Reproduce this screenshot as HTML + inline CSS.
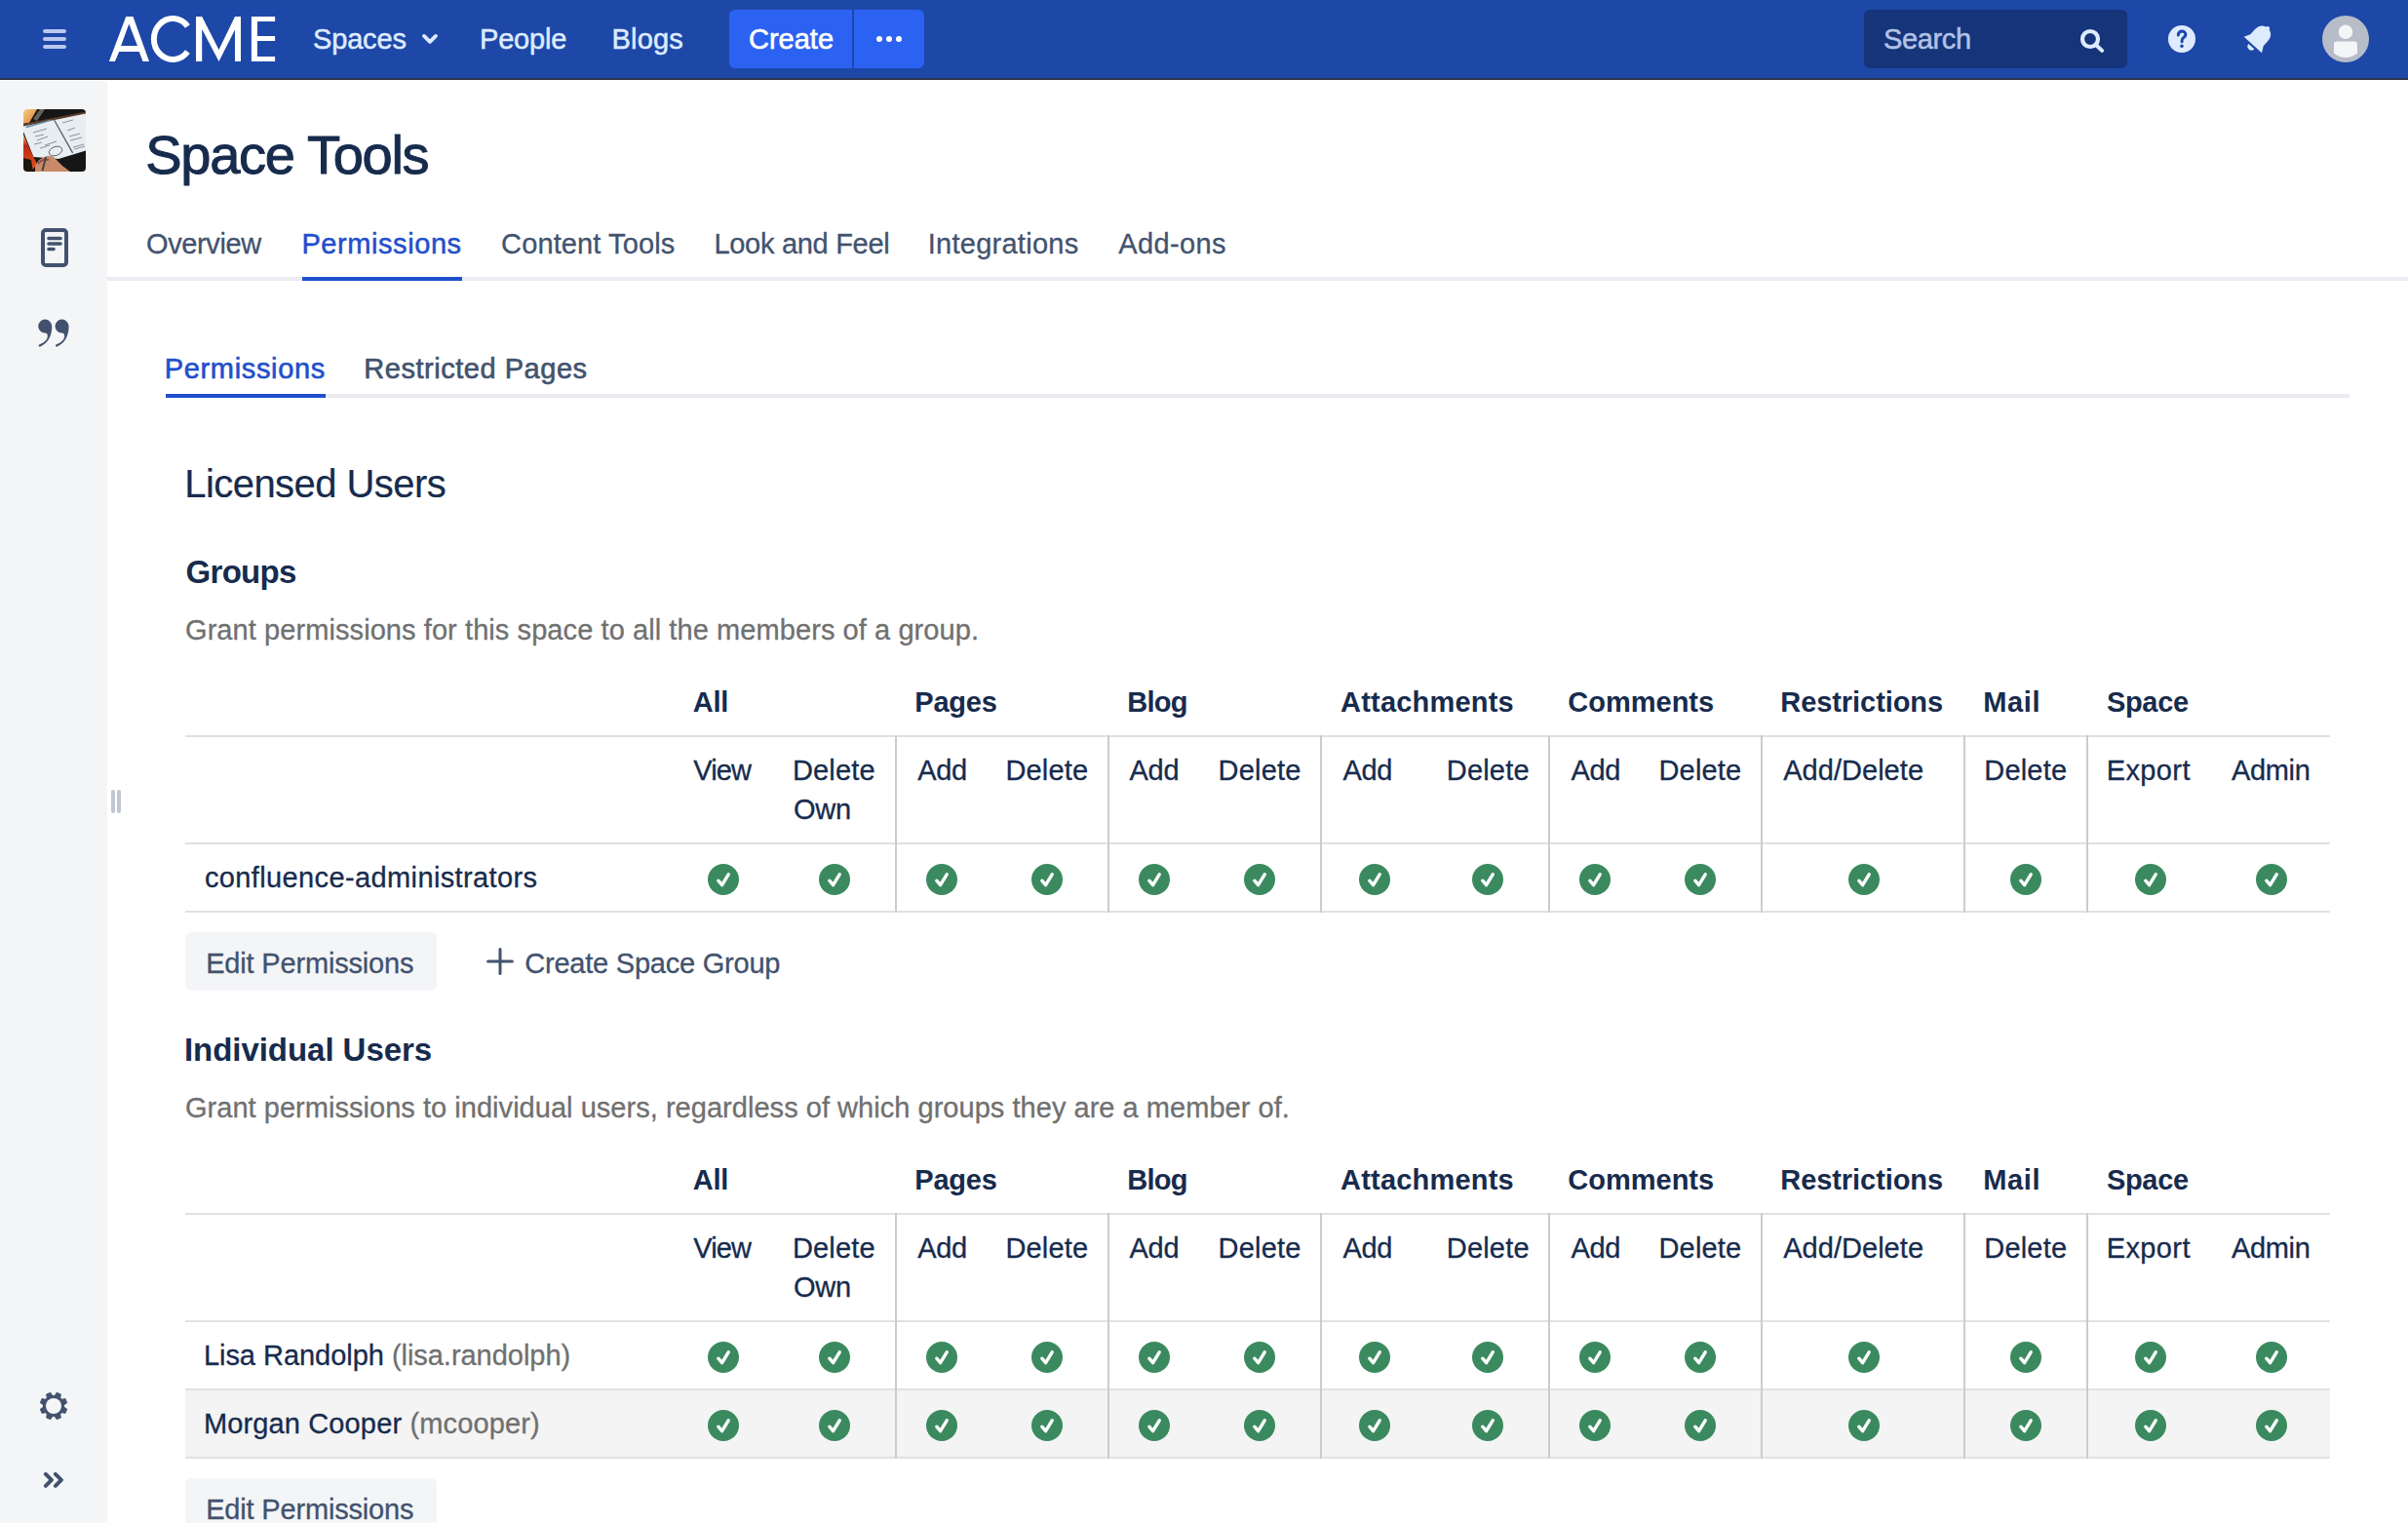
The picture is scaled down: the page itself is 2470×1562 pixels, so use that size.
<!DOCTYPE html>
<html><head><meta charset="utf-8"><title>Space Tools - Permissions</title>
<style>
html,body{margin:0;padding:0;}
body{width:2470px;height:1562px;position:relative;overflow:hidden;background:#fff;font-family:"Liberation Sans", sans-serif;-webkit-font-smoothing:antialiased;}
</style></head><body>
<div style="position:absolute;left:0px;top:0px;width:2470px;height:80px;background:#1D48A8;"></div>
<div style="position:absolute;left:0px;top:80px;width:2470px;height:2px;background:#283349;"></div>
<div style="position:absolute;left:44px;top:30px;width:24px;height:4px;background:#B8C8EE;border-radius:2px;"></div>
<div style="position:absolute;left:44px;top:38px;width:24px;height:4px;background:#B8C8EE;border-radius:2px;"></div>
<div style="position:absolute;left:44px;top:46px;width:24px;height:4px;background:#B8C8EE;border-radius:2px;"></div>
<svg style="position:absolute;left:0;top:0" width="300" height="80" viewBox="0 0 300 80">
<path fill="#fff" fill-rule="evenodd" d="M111.9 63 L129.2 16.9 L136.5 16.9 L153 63 L146.5 63 L142.7 53 L122.2 53 L117.9 63 Z M124.1 46.9 L132.3 24.6 L141 46.9 Z"/>
<path fill="none" stroke="#fff" stroke-width="6" d="M192.4 27.1 A19.3 21 0 1 0 192.4 52.9"/>
<path fill="#fff" d="M201 63 L201 16.9 L207.2 16.9 L224.5 51.1 L241 16.9 L247 16.9 L247 63 L241 63 L241 30.4 L224.5 63 L207.2 30 L207.2 63 Z"/>
<path fill="#fff" d="M257.9 16.9 H282.1 V21.9 H264 V36.9 H282.1 V42.1 H264 V58 H282.1 V63 H257.9 Z"/>
</svg>
<div style="position:absolute;left:321.00px;top:26px;font-size:29px;line-height:29px;font-weight:400;color:#DEEBFF;white-space:nowrap;letter-spacing:-0.166px;-webkit-text-stroke:0.5px #DEEBFF;">Spaces</div>
<svg style="position:absolute;left:428px;top:30px" width="26" height="20"><path d="M7 6.9 L13 12.8 L19 6.9" fill="none" stroke="#DEEBFF" stroke-width="3.8" stroke-linecap="round" stroke-linejoin="round"/></svg>
<div style="position:absolute;left:492.00px;top:26px;font-size:29px;line-height:29px;font-weight:400;color:#DEEBFF;white-space:nowrap;letter-spacing:-0.194px;-webkit-text-stroke:0.5px #DEEBFF;">People</div>
<div style="position:absolute;left:627.50px;top:26px;font-size:29px;line-height:29px;font-weight:400;color:#DEEBFF;white-space:nowrap;letter-spacing:0.189px;-webkit-text-stroke:0.5px #DEEBFF;">Blogs</div>
<div style="position:absolute;left:748px;top:10px;width:200px;height:60px;background:#2C62F2;border-radius:6px;"></div>
<div style="position:absolute;left:874px;top:10px;width:2px;height:60px;background:#1D48A8;"></div>
<div style="position:absolute;left:768.00px;top:26px;font-size:29px;line-height:29px;font-weight:400;color:#FFFFFF;white-space:nowrap;letter-spacing:-0.003px;-webkit-text-stroke:0.6px #FFFFFF;">Create</div>
<div style="position:absolute;left:899px;top:37px;width:6px;height:6px;border-radius:3px;background:#fff"></div>
<div style="position:absolute;left:909px;top:37px;width:6px;height:6px;border-radius:3px;background:#fff"></div>
<div style="position:absolute;left:919px;top:37px;width:6px;height:6px;border-radius:3px;background:#fff"></div>
<div style="position:absolute;left:1912px;top:10px;width:270px;height:60px;background:#16347A;border-radius:6px;"></div>
<div style="position:absolute;left:1932.00px;top:26px;font-size:29px;line-height:29px;font-weight:400;color:#B3C3E6;white-space:nowrap;letter-spacing:-0.351px;-webkit-text-stroke:0.5px #B3C3E6;">Search</div>
<svg style="position:absolute;left:2120px;top:15px" width="50" height="50"><circle cx="24" cy="25" r="8" fill="none" stroke="#DEEBFF" stroke-width="4.2"/><path d="M29.7 30.7 L36.1 36.9" stroke="#DEEBFF" stroke-width="4" stroke-linecap="round"/></svg>
<svg style="position:absolute;left:2220px;top:22px" width="36" height="36" viewBox="0 0 36 36"><circle cx="18" cy="18" r="14" fill="#DEEBFF"/><path d="M14.3 14 C14.3 11.4 16.1 10 18.1 10 C20.3 10 21.9 11.5 21.9 13.5 C21.9 16.2 18.1 16.6 18.1 19.4 L18.1 20.8" fill="none" stroke="#1D48A8" stroke-width="3" stroke-linecap="round"/><circle cx="18" cy="25.3" r="1.8" fill="#1D48A8"/></svg>
<svg style="position:absolute;left:2298px;top:20px" width="40" height="36" viewBox="0 0 40 36"><g transform="translate(20 18) rotate(42) scale(1.12) translate(-20 -17)"><path d="M20 4.5 C21.3 4.5 22 5.3 22 6.3 C26 7.4 28 10.6 28 15 L28 21 L31 26.5 L9 26.5 L12 21 L12 15 C12 10.6 14 7.4 18 6.3 C18 5.3 18.7 4.5 20 4.5 Z" fill="#DEEBFF"/><path d="M16.5 28.5 A3.5 3.5 0 0 0 23.5 28.5 Z" fill="#DEEBFF"/></g></svg>
<svg style="position:absolute;left:2382px;top:16px" width="48" height="48" viewBox="0 0 48 48"><defs><clipPath id="avc"><circle cx="24" cy="24" r="24"/></clipPath></defs><circle cx="24" cy="24" r="24" fill="#B6BDC8"/><circle cx="24" cy="16.8" r="7.3" fill="#F4F5F7"/><path d="M12 29.6 Q12 26.6 15 26.6 L33 26.6 Q36 26.6 36 29.6 L36 38.5 Q24 47.5 12 38.5 Z" fill="#F4F5F7"/></svg>
<div style="position:absolute;left:0px;top:83px;width:110px;height:1479px;background:#F4F5F7;"></div>
<svg style="position:absolute;left:24px;top:112px" width="64" height="64" viewBox="0 0 64 64"><defs><clipPath id="sa"><rect width="64" height="64" rx="4"/></clipPath>
<linearGradient id="og" x1="0" y1="0" x2="1" y2="1"><stop offset="0" stop-color="#F6D08A"/><stop offset="1" stop-color="#D9782A"/></linearGradient>
<linearGradient id="rg" x1="0" y1="0" x2="0" y2="1"><stop offset="0" stop-color="#F0C070"/><stop offset="0.3" stop-color="#B82818"/><stop offset="0.6" stop-color="#D03A18"/><stop offset="1" stop-color="#E06020"/></linearGradient>
<filter id="bl"><feGaussianBlur stdDeviation="0.5"/></filter></defs>
<g clip-path="url(#sa)"><g filter="url(#bl)">
<rect width="64" height="64" fill="#121418"/>
<path d="M0 0 H14 L6 14 L0 15 Z" fill="url(#og)"/>
<path d="M10 10 L17 0 L22 0 L14 12 Z" fill="#6a6258"/>
<path d="M0 14.7 L64 2.5 L64 6 L0 18 Z" fill="#5a3a28"/>
<path d="M0 17.5 L64 4.5 L64 42.5 L36 51 L10.4 49 L0 23 Z" fill="#E8EDF2"/>

<path d="M0 26 L10.4 49 L14 56 L8 64 L0 64 Z" fill="url(#rg)"/>
<path d="M0 50 L8 52 L10 64 L0 64 Z" fill="#1a1210"/>
<path d="M2.8 18.4 L27.9 11.3" stroke="#5E8CA6" stroke-width="1.6"/>
<path d="M31.7 11.3 L50.6 44.9" stroke="#555d66" stroke-width="1.3"/>
<path d="M10 24 L24 20 M12 28 L21 26 M14 32 L25 28 M11 36 L19 34 M22 37 L34 33 M17 40 L27 37 M40 14 L51 11 M45 22 L53 19 M47 28 L58 25 M48 32 L60 29 M51 39 L62 36 M52 41 L63 38" stroke="#7d8790" stroke-width="0.9"/>
<ellipse cx="33" cy="43" rx="7" ry="4.5" transform="rotate(-20 33 43)" fill="none" stroke="#5a6068" stroke-width="0.9"/>
<path d="M12 58 Q16 50 24 48 Q30 47 34 52 L40 58 L48 64 L12 64 Z" fill="#C98A6A"/>
<path d="M15 56 Q20 50 26 52" stroke="#8a5040" stroke-width="2" fill="none"/>
<path d="M19.5 63 L23 49" stroke="#3a4048" stroke-width="1.8"/>
</g></g></svg>
<svg style="position:absolute;left:40px;top:232px" width="32" height="44" viewBox="0 0 32 44"><rect x="4" y="4" width="24" height="36" rx="3" fill="none" stroke="#42526E" stroke-width="4"/><path d="M10 12.5 H22 M10 18 H22 M10 23.5 H15" stroke="#42526E" stroke-width="3.6" stroke-linecap="round"/></svg>
<svg style="position:absolute;left:36px;top:324px" width="40" height="36" viewBox="0 0 40 36"><path d="M10.2 3.6 A7 7 0 0 1 17.2 10.6 C17.6 20.5 12.5 28.8 5.4 31.4 C4.4 31.8 3.5 31.1 3.7 30.2 C3.8 29.6 4.4 29.1 5.2 28.9 C9.5 27.7 12.8 24.2 12.8 20.6 C12.8 18.6 11.8 17.6 10.2 17.6 A7 7 0 0 1 10.2 3.6 Z" fill="#42526E"/><path transform="translate(17.3 0)" d="M10.2 3.6 A7 7 0 0 1 17.2 10.6 C17.6 20.5 12.5 28.8 5.4 31.4 C4.4 31.8 3.5 31.1 3.7 30.2 C3.8 29.6 4.4 29.1 5.2 28.9 C9.5 27.7 12.8 24.2 12.8 20.6 C12.8 18.6 11.8 17.6 10.2 17.6 A7 7 0 0 1 10.2 3.6 Z" fill="#42526E"/></svg>
<svg style="position:absolute;left:35px;top:1422px" width="40" height="40" viewBox="-20 -20 40 40"><g fill="#42526E"><path d="M-3.3 -8.5 L-2.3 -13.9 L2.3 -13.9 L3.3 -8.5 Z" stroke="#42526E" stroke-width="0.8" stroke-linejoin="round" transform="rotate(22.5)"/><path d="M-3.3 -8.5 L-2.3 -13.9 L2.3 -13.9 L3.3 -8.5 Z" stroke="#42526E" stroke-width="0.8" stroke-linejoin="round" transform="rotate(67.5)"/><path d="M-3.3 -8.5 L-2.3 -13.9 L2.3 -13.9 L3.3 -8.5 Z" stroke="#42526E" stroke-width="0.8" stroke-linejoin="round" transform="rotate(112.5)"/><path d="M-3.3 -8.5 L-2.3 -13.9 L2.3 -13.9 L3.3 -8.5 Z" stroke="#42526E" stroke-width="0.8" stroke-linejoin="round" transform="rotate(157.5)"/><path d="M-3.3 -8.5 L-2.3 -13.9 L2.3 -13.9 L3.3 -8.5 Z" stroke="#42526E" stroke-width="0.8" stroke-linejoin="round" transform="rotate(202.5)"/><path d="M-3.3 -8.5 L-2.3 -13.9 L2.3 -13.9 L3.3 -8.5 Z" stroke="#42526E" stroke-width="0.8" stroke-linejoin="round" transform="rotate(247.5)"/><path d="M-3.3 -8.5 L-2.3 -13.9 L2.3 -13.9 L3.3 -8.5 Z" stroke="#42526E" stroke-width="0.8" stroke-linejoin="round" transform="rotate(292.5)"/><path d="M-3.3 -8.5 L-2.3 -13.9 L2.3 -13.9 L3.3 -8.5 Z" stroke="#42526E" stroke-width="0.8" stroke-linejoin="round" transform="rotate(337.5)"/><circle r="11.1"/></g><circle r="8" fill="#F4F5F7"/></svg>
<svg style="position:absolute;left:40px;top:1504px" width="30" height="28" viewBox="0 0 30 28"><path d="M6.9 7.9 L12.9 13.85 L6.9 19.8 M16.9 7.9 L22.9 13.85 L16.9 19.8" fill="none" stroke="#42526E" stroke-width="4" stroke-linecap="round" stroke-linejoin="round"/></svg>
<div style="position:absolute;left:114px;top:810px;width:4px;height:24px;background:#C1C7D0;border-radius:2px;"></div>
<div style="position:absolute;left:120px;top:810px;width:4px;height:24px;background:#C1C7D0;border-radius:2px;"></div>
<div style="position:absolute;left:149.20px;top:131px;font-size:56px;line-height:56px;font-weight:400;color:#172B4D;white-space:nowrap;letter-spacing:-1.267px;-webkit-text-stroke:1.0px #172B4D;">Space Tools</div>
<div style="position:absolute;left:110px;top:284px;width:2360px;height:4px;background:#EBECF0;"></div>
<div style="position:absolute;left:150.00px;top:236px;font-size:29px;line-height:29px;font-weight:400;color:#42526E;white-space:nowrap;letter-spacing:-0.373px;-webkit-text-stroke:0.3px #42526E;">Overview</div>
<div style="position:absolute;left:309.40px;top:236px;font-size:29px;line-height:29px;font-weight:400;color:#1F4FCC;white-space:nowrap;letter-spacing:0.577px;-webkit-text-stroke:0.5px #1F4FCC;">Permissions</div>
<div style="position:absolute;left:310px;top:284px;width:164px;height:4px;background:#1F4FCC;"></div>
<div style="position:absolute;left:514.10px;top:236px;font-size:29px;line-height:29px;font-weight:400;color:#42526E;white-space:nowrap;letter-spacing:0.114px;-webkit-text-stroke:0.3px #42526E;">Content Tools</div>
<div style="position:absolute;left:732.40px;top:236px;font-size:29px;line-height:29px;font-weight:400;color:#42526E;white-space:nowrap;letter-spacing:-0.288px;-webkit-text-stroke:0.3px #42526E;">Look and Feel</div>
<div style="position:absolute;left:951.70px;top:236px;font-size:29px;line-height:29px;font-weight:400;color:#42526E;white-space:nowrap;letter-spacing:0.269px;-webkit-text-stroke:0.3px #42526E;">Integrations</div>
<div style="position:absolute;left:1147.30px;top:236px;font-size:29px;line-height:29px;font-weight:400;color:#42526E;white-space:nowrap;letter-spacing:0.364px;-webkit-text-stroke:0.3px #42526E;">Add-ons</div>
<div style="position:absolute;left:170px;top:404px;width:2240px;height:4px;background:#EBECF0;"></div>
<div style="position:absolute;left:168.80px;top:364px;font-size:29px;line-height:29px;font-weight:400;color:#1F4FCC;white-space:nowrap;letter-spacing:0.647px;-webkit-text-stroke:0.6px #1F4FCC;">Permissions</div>
<div style="position:absolute;left:170px;top:404px;width:164px;height:4px;background:#1F4FCC;"></div>
<div style="position:absolute;left:373.30px;top:364px;font-size:29px;line-height:29px;font-weight:400;color:#42526E;white-space:nowrap;letter-spacing:0.531px;-webkit-text-stroke:0.6px #42526E;">Restricted Pages</div>
<div style="position:absolute;left:189.20px;top:476px;font-size:40px;line-height:40px;font-weight:400;color:#172B4D;white-space:nowrap;letter-spacing:-0.545px;-webkit-text-stroke:0.2px #172B4D;">Licensed Users</div>
<div style="position:absolute;left:190.60px;top:570px;font-size:33px;line-height:33px;font-weight:700;color:#172B4D;white-space:nowrap;letter-spacing:-0.737px;">Groups</div>
<div style="position:absolute;left:190.00px;top:632px;font-size:29px;line-height:29px;font-weight:400;color:#707070;white-space:nowrap;letter-spacing:0.079px;-webkit-text-stroke:0.3px #707070;">Grant permissions for this space to all the members of a group.</div>
<div style="position:absolute;left:710.70px;top:706px;font-size:29px;line-height:29px;font-weight:700;color:#172B4D;white-space:nowrap;letter-spacing:-0.200px;">All</div>
<div style="position:absolute;left:938.30px;top:706px;font-size:29px;line-height:29px;font-weight:700;color:#172B4D;white-space:nowrap;letter-spacing:-0.228px;">Pages</div>
<div style="position:absolute;left:1156.20px;top:706px;font-size:29px;line-height:29px;font-weight:700;color:#172B4D;white-space:nowrap;letter-spacing:-0.705px;">Blog</div>
<div style="position:absolute;left:1375.00px;top:706px;font-size:29px;line-height:29px;font-weight:700;color:#172B4D;white-space:nowrap;letter-spacing:0.209px;">Attachments</div>
<div style="position:absolute;left:1608.30px;top:706px;font-size:29px;line-height:29px;font-weight:700;color:#172B4D;white-space:nowrap;letter-spacing:-0.004px;">Comments</div>
<div style="position:absolute;left:1826.30px;top:706px;font-size:29px;line-height:29px;font-weight:700;color:#172B4D;white-space:nowrap;letter-spacing:-0.070px;">Restrictions</div>
<div style="position:absolute;left:2034.20px;top:706px;font-size:29px;line-height:29px;font-weight:700;color:#172B4D;white-space:nowrap;letter-spacing:0.619px;">Mail</div>
<div style="position:absolute;left:2160.90px;top:706px;font-size:29px;line-height:29px;font-weight:700;color:#172B4D;white-space:nowrap;letter-spacing:-0.303px;">Space</div>
<div style="position:absolute;left:190px;top:754px;width:2200px;height:2px;background:#DFE1E6;"></div>
<div style="position:absolute;left:711.30px;top:776px;font-size:29px;line-height:29px;font-weight:400;color:#172B4D;white-space:nowrap;letter-spacing:-0.930px;-webkit-text-stroke:0.3px #172B4D;">View</div>
<div style="position:absolute;left:812.90px;top:776px;font-size:29px;line-height:29px;font-weight:400;color:#172B4D;white-space:nowrap;letter-spacing:0.180px;-webkit-text-stroke:0.3px #172B4D;">Delete</div>
<div style="position:absolute;left:941.20px;top:776px;font-size:29px;line-height:29px;font-weight:400;color:#172B4D;white-space:nowrap;letter-spacing:-0.336px;-webkit-text-stroke:0.3px #172B4D;">Add</div>
<div style="position:absolute;left:1031.40px;top:776px;font-size:29px;line-height:29px;font-weight:400;color:#172B4D;white-space:nowrap;letter-spacing:0.180px;-webkit-text-stroke:0.3px #172B4D;">Delete</div>
<div style="position:absolute;left:1158.60px;top:776px;font-size:29px;line-height:29px;font-weight:400;color:#172B4D;white-space:nowrap;letter-spacing:-0.336px;-webkit-text-stroke:0.3px #172B4D;">Add</div>
<div style="position:absolute;left:1249.60px;top:776px;font-size:29px;line-height:29px;font-weight:400;color:#172B4D;white-space:nowrap;letter-spacing:0.180px;-webkit-text-stroke:0.3px #172B4D;">Delete</div>
<div style="position:absolute;left:1377.50px;top:776px;font-size:29px;line-height:29px;font-weight:400;color:#172B4D;white-space:nowrap;letter-spacing:-0.336px;-webkit-text-stroke:0.3px #172B4D;">Add</div>
<div style="position:absolute;left:1483.80px;top:776px;font-size:29px;line-height:29px;font-weight:400;color:#172B4D;white-space:nowrap;letter-spacing:0.180px;-webkit-text-stroke:0.3px #172B4D;">Delete</div>
<div style="position:absolute;left:1611.40px;top:776px;font-size:29px;line-height:29px;font-weight:400;color:#172B4D;white-space:nowrap;letter-spacing:-0.336px;-webkit-text-stroke:0.3px #172B4D;">Add</div>
<div style="position:absolute;left:1701.50px;top:776px;font-size:29px;line-height:29px;font-weight:400;color:#172B4D;white-space:nowrap;letter-spacing:0.180px;-webkit-text-stroke:0.3px #172B4D;">Delete</div>
<div style="position:absolute;left:1829.20px;top:776px;font-size:29px;line-height:29px;font-weight:400;color:#172B4D;white-space:nowrap;letter-spacing:0.038px;-webkit-text-stroke:0.3px #172B4D;">Add/Delete</div>
<div style="position:absolute;left:2035.30px;top:776px;font-size:29px;line-height:29px;font-weight:400;color:#172B4D;white-space:nowrap;letter-spacing:0.180px;-webkit-text-stroke:0.3px #172B4D;">Delete</div>
<div style="position:absolute;left:2160.70px;top:776px;font-size:29px;line-height:29px;font-weight:400;color:#172B4D;white-space:nowrap;letter-spacing:0.389px;-webkit-text-stroke:0.3px #172B4D;">Export</div>
<div style="position:absolute;left:2289.00px;top:776px;font-size:29px;line-height:29px;font-weight:400;color:#172B4D;white-space:nowrap;letter-spacing:-0.343px;-webkit-text-stroke:0.3px #172B4D;">Admin</div>
<div style="position:absolute;left:813.90px;top:816px;font-size:29px;line-height:29px;font-weight:400;color:#172B4D;white-space:nowrap;letter-spacing:-0.200px;-webkit-text-stroke:0.3px #172B4D;">Own</div>
<div style="position:absolute;left:190px;top:864px;width:2200px;height:2px;background:#DFE1E6;"></div>
<div style="position:absolute;left:209.90px;top:886px;font-size:29px;line-height:29px;font-weight:400;color:#172B4D;white-space:nowrap;letter-spacing:0.382px;-webkit-text-stroke:0.3px #172B4D;">confluence-administrators</div>
<svg style="position:absolute;left:726px;top:886px" width="32" height="32" viewBox="-16 -16 32 32"><circle r="16" fill="#3B8A5F"/><path d="M-5.2 1.2 L-1.4 5.6 L5.2 -5.2" fill="none" stroke="#fff" stroke-width="3.4" stroke-linecap="round" stroke-linejoin="round"/></svg>
<svg style="position:absolute;left:839.8px;top:886px" width="32" height="32" viewBox="-16 -16 32 32"><circle r="16" fill="#3B8A5F"/><path d="M-5.2 1.2 L-1.4 5.6 L5.2 -5.2" fill="none" stroke="#fff" stroke-width="3.4" stroke-linecap="round" stroke-linejoin="round"/></svg>
<svg style="position:absolute;left:949.9px;top:886px" width="32" height="32" viewBox="-16 -16 32 32"><circle r="16" fill="#3B8A5F"/><path d="M-5.2 1.2 L-1.4 5.6 L5.2 -5.2" fill="none" stroke="#fff" stroke-width="3.4" stroke-linecap="round" stroke-linejoin="round"/></svg>
<svg style="position:absolute;left:1058px;top:886px" width="32" height="32" viewBox="-16 -16 32 32"><circle r="16" fill="#3B8A5F"/><path d="M-5.2 1.2 L-1.4 5.6 L5.2 -5.2" fill="none" stroke="#fff" stroke-width="3.4" stroke-linecap="round" stroke-linejoin="round"/></svg>
<svg style="position:absolute;left:1168px;top:886px" width="32" height="32" viewBox="-16 -16 32 32"><circle r="16" fill="#3B8A5F"/><path d="M-5.2 1.2 L-1.4 5.6 L5.2 -5.2" fill="none" stroke="#fff" stroke-width="3.4" stroke-linecap="round" stroke-linejoin="round"/></svg>
<svg style="position:absolute;left:1276px;top:886px" width="32" height="32" viewBox="-16 -16 32 32"><circle r="16" fill="#3B8A5F"/><path d="M-5.2 1.2 L-1.4 5.6 L5.2 -5.2" fill="none" stroke="#fff" stroke-width="3.4" stroke-linecap="round" stroke-linejoin="round"/></svg>
<svg style="position:absolute;left:1393.8px;top:886px" width="32" height="32" viewBox="-16 -16 32 32"><circle r="16" fill="#3B8A5F"/><path d="M-5.2 1.2 L-1.4 5.6 L5.2 -5.2" fill="none" stroke="#fff" stroke-width="3.4" stroke-linecap="round" stroke-linejoin="round"/></svg>
<svg style="position:absolute;left:1509.8px;top:886px" width="32" height="32" viewBox="-16 -16 32 32"><circle r="16" fill="#3B8A5F"/><path d="M-5.2 1.2 L-1.4 5.6 L5.2 -5.2" fill="none" stroke="#fff" stroke-width="3.4" stroke-linecap="round" stroke-linejoin="round"/></svg>
<svg style="position:absolute;left:1619.9px;top:886px" width="32" height="32" viewBox="-16 -16 32 32"><circle r="16" fill="#3B8A5F"/><path d="M-5.2 1.2 L-1.4 5.6 L5.2 -5.2" fill="none" stroke="#fff" stroke-width="3.4" stroke-linecap="round" stroke-linejoin="round"/></svg>
<svg style="position:absolute;left:1727.8px;top:886px" width="32" height="32" viewBox="-16 -16 32 32"><circle r="16" fill="#3B8A5F"/><path d="M-5.2 1.2 L-1.4 5.6 L5.2 -5.2" fill="none" stroke="#fff" stroke-width="3.4" stroke-linecap="round" stroke-linejoin="round"/></svg>
<svg style="position:absolute;left:1896.1px;top:886px" width="32" height="32" viewBox="-16 -16 32 32"><circle r="16" fill="#3B8A5F"/><path d="M-5.2 1.2 L-1.4 5.6 L5.2 -5.2" fill="none" stroke="#fff" stroke-width="3.4" stroke-linecap="round" stroke-linejoin="round"/></svg>
<svg style="position:absolute;left:2061.9px;top:886px" width="32" height="32" viewBox="-16 -16 32 32"><circle r="16" fill="#3B8A5F"/><path d="M-5.2 1.2 L-1.4 5.6 L5.2 -5.2" fill="none" stroke="#fff" stroke-width="3.4" stroke-linecap="round" stroke-linejoin="round"/></svg>
<svg style="position:absolute;left:2189.8px;top:886px" width="32" height="32" viewBox="-16 -16 32 32"><circle r="16" fill="#3B8A5F"/><path d="M-5.2 1.2 L-1.4 5.6 L5.2 -5.2" fill="none" stroke="#fff" stroke-width="3.4" stroke-linecap="round" stroke-linejoin="round"/></svg>
<svg style="position:absolute;left:2313.9px;top:886px" width="32" height="32" viewBox="-16 -16 32 32"><circle r="16" fill="#3B8A5F"/><path d="M-5.2 1.2 L-1.4 5.6 L5.2 -5.2" fill="none" stroke="#fff" stroke-width="3.4" stroke-linecap="round" stroke-linejoin="round"/></svg>
<div style="position:absolute;left:190px;top:934px;width:2200px;height:2px;background:#DFE1E6;"></div>
<div style="position:absolute;left:918px;top:754px;width:2px;height:182px;background:#CCCCCC;"></div>
<div style="position:absolute;left:1136px;top:754px;width:2px;height:182px;background:#CCCCCC;"></div>
<div style="position:absolute;left:1354px;top:754px;width:2px;height:182px;background:#CCCCCC;"></div>
<div style="position:absolute;left:1588px;top:754px;width:2px;height:182px;background:#CCCCCC;"></div>
<div style="position:absolute;left:1806px;top:754px;width:2px;height:182px;background:#CCCCCC;"></div>
<div style="position:absolute;left:2014px;top:754px;width:2px;height:182px;background:#CCCCCC;"></div>
<div style="position:absolute;left:2140px;top:754px;width:2px;height:182px;background:#CCCCCC;"></div>
<div style="position:absolute;left:190px;top:956px;width:258px;height:60px;background:#F4F5F7;border-radius:6px;"></div>
<div style="position:absolute;left:211.20px;top:974px;font-size:29px;line-height:29px;font-weight:400;color:#42526E;white-space:nowrap;letter-spacing:-0.177px;-webkit-text-stroke:0.3px #42526E;">Edit Permissions</div>
<svg style="position:absolute;left:496px;top:969px" width="34" height="34"><path d="M17 4.6 V29.4 M4.6 17 H29.4" stroke="#42526E" stroke-width="3" stroke-linecap="round"/></svg>
<div style="position:absolute;left:538.30px;top:974px;font-size:29px;line-height:29px;font-weight:400;color:#42526E;white-space:nowrap;letter-spacing:-0.227px;-webkit-text-stroke:0.3px #42526E;">Create Space Group</div>
<div style="position:absolute;left:189.00px;top:1060px;font-size:33px;line-height:33px;font-weight:700;color:#172B4D;white-space:nowrap;letter-spacing:-0.051px;">Individual Users</div>
<div style="position:absolute;left:190.00px;top:1122px;font-size:29px;line-height:29px;font-weight:400;color:#707070;white-space:nowrap;letter-spacing:0.034px;-webkit-text-stroke:0.3px #707070;">Grant permissions to individual users, regardless of which groups they are a member of.</div>
<div style="position:absolute;left:710.70px;top:1196px;font-size:29px;line-height:29px;font-weight:700;color:#172B4D;white-space:nowrap;letter-spacing:-0.200px;">All</div>
<div style="position:absolute;left:938.30px;top:1196px;font-size:29px;line-height:29px;font-weight:700;color:#172B4D;white-space:nowrap;letter-spacing:-0.228px;">Pages</div>
<div style="position:absolute;left:1156.20px;top:1196px;font-size:29px;line-height:29px;font-weight:700;color:#172B4D;white-space:nowrap;letter-spacing:-0.705px;">Blog</div>
<div style="position:absolute;left:1375.00px;top:1196px;font-size:29px;line-height:29px;font-weight:700;color:#172B4D;white-space:nowrap;letter-spacing:0.209px;">Attachments</div>
<div style="position:absolute;left:1608.30px;top:1196px;font-size:29px;line-height:29px;font-weight:700;color:#172B4D;white-space:nowrap;letter-spacing:-0.004px;">Comments</div>
<div style="position:absolute;left:1826.30px;top:1196px;font-size:29px;line-height:29px;font-weight:700;color:#172B4D;white-space:nowrap;letter-spacing:-0.070px;">Restrictions</div>
<div style="position:absolute;left:2034.20px;top:1196px;font-size:29px;line-height:29px;font-weight:700;color:#172B4D;white-space:nowrap;letter-spacing:0.619px;">Mail</div>
<div style="position:absolute;left:2160.90px;top:1196px;font-size:29px;line-height:29px;font-weight:700;color:#172B4D;white-space:nowrap;letter-spacing:-0.303px;">Space</div>
<div style="position:absolute;left:190px;top:1244px;width:2200px;height:2px;background:#DFE1E6;"></div>
<div style="position:absolute;left:711.30px;top:1266px;font-size:29px;line-height:29px;font-weight:400;color:#172B4D;white-space:nowrap;letter-spacing:-0.930px;-webkit-text-stroke:0.3px #172B4D;">View</div>
<div style="position:absolute;left:812.90px;top:1266px;font-size:29px;line-height:29px;font-weight:400;color:#172B4D;white-space:nowrap;letter-spacing:0.180px;-webkit-text-stroke:0.3px #172B4D;">Delete</div>
<div style="position:absolute;left:941.20px;top:1266px;font-size:29px;line-height:29px;font-weight:400;color:#172B4D;white-space:nowrap;letter-spacing:-0.336px;-webkit-text-stroke:0.3px #172B4D;">Add</div>
<div style="position:absolute;left:1031.40px;top:1266px;font-size:29px;line-height:29px;font-weight:400;color:#172B4D;white-space:nowrap;letter-spacing:0.180px;-webkit-text-stroke:0.3px #172B4D;">Delete</div>
<div style="position:absolute;left:1158.60px;top:1266px;font-size:29px;line-height:29px;font-weight:400;color:#172B4D;white-space:nowrap;letter-spacing:-0.336px;-webkit-text-stroke:0.3px #172B4D;">Add</div>
<div style="position:absolute;left:1249.60px;top:1266px;font-size:29px;line-height:29px;font-weight:400;color:#172B4D;white-space:nowrap;letter-spacing:0.180px;-webkit-text-stroke:0.3px #172B4D;">Delete</div>
<div style="position:absolute;left:1377.50px;top:1266px;font-size:29px;line-height:29px;font-weight:400;color:#172B4D;white-space:nowrap;letter-spacing:-0.336px;-webkit-text-stroke:0.3px #172B4D;">Add</div>
<div style="position:absolute;left:1483.80px;top:1266px;font-size:29px;line-height:29px;font-weight:400;color:#172B4D;white-space:nowrap;letter-spacing:0.180px;-webkit-text-stroke:0.3px #172B4D;">Delete</div>
<div style="position:absolute;left:1611.40px;top:1266px;font-size:29px;line-height:29px;font-weight:400;color:#172B4D;white-space:nowrap;letter-spacing:-0.336px;-webkit-text-stroke:0.3px #172B4D;">Add</div>
<div style="position:absolute;left:1701.50px;top:1266px;font-size:29px;line-height:29px;font-weight:400;color:#172B4D;white-space:nowrap;letter-spacing:0.180px;-webkit-text-stroke:0.3px #172B4D;">Delete</div>
<div style="position:absolute;left:1829.20px;top:1266px;font-size:29px;line-height:29px;font-weight:400;color:#172B4D;white-space:nowrap;letter-spacing:0.038px;-webkit-text-stroke:0.3px #172B4D;">Add/Delete</div>
<div style="position:absolute;left:2035.30px;top:1266px;font-size:29px;line-height:29px;font-weight:400;color:#172B4D;white-space:nowrap;letter-spacing:0.180px;-webkit-text-stroke:0.3px #172B4D;">Delete</div>
<div style="position:absolute;left:2160.70px;top:1266px;font-size:29px;line-height:29px;font-weight:400;color:#172B4D;white-space:nowrap;letter-spacing:0.389px;-webkit-text-stroke:0.3px #172B4D;">Export</div>
<div style="position:absolute;left:2289.00px;top:1266px;font-size:29px;line-height:29px;font-weight:400;color:#172B4D;white-space:nowrap;letter-spacing:-0.343px;-webkit-text-stroke:0.3px #172B4D;">Admin</div>
<div style="position:absolute;left:813.90px;top:1306px;font-size:29px;line-height:29px;font-weight:400;color:#172B4D;white-space:nowrap;letter-spacing:-0.200px;-webkit-text-stroke:0.3px #172B4D;">Own</div>
<div style="position:absolute;left:190px;top:1354px;width:2200px;height:2px;background:#DFE1E6;"></div>
<div style="position:absolute;left:208.90px;top:1376px;font-size:29px;line-height:29px;font-weight:400;color:#172B4D;white-space:nowrap;letter-spacing:-0.035px;-webkit-text-stroke:0.3px #172B4D;">Lisa Randolph <span style="color:#707070;-webkit-text-stroke-color:#707070">(lisa.randolph)</span></div>
<svg style="position:absolute;left:726px;top:1376px" width="32" height="32" viewBox="-16 -16 32 32"><circle r="16" fill="#3B8A5F"/><path d="M-5.2 1.2 L-1.4 5.6 L5.2 -5.2" fill="none" stroke="#fff" stroke-width="3.4" stroke-linecap="round" stroke-linejoin="round"/></svg>
<svg style="position:absolute;left:839.8px;top:1376px" width="32" height="32" viewBox="-16 -16 32 32"><circle r="16" fill="#3B8A5F"/><path d="M-5.2 1.2 L-1.4 5.6 L5.2 -5.2" fill="none" stroke="#fff" stroke-width="3.4" stroke-linecap="round" stroke-linejoin="round"/></svg>
<svg style="position:absolute;left:949.9px;top:1376px" width="32" height="32" viewBox="-16 -16 32 32"><circle r="16" fill="#3B8A5F"/><path d="M-5.2 1.2 L-1.4 5.6 L5.2 -5.2" fill="none" stroke="#fff" stroke-width="3.4" stroke-linecap="round" stroke-linejoin="round"/></svg>
<svg style="position:absolute;left:1058px;top:1376px" width="32" height="32" viewBox="-16 -16 32 32"><circle r="16" fill="#3B8A5F"/><path d="M-5.2 1.2 L-1.4 5.6 L5.2 -5.2" fill="none" stroke="#fff" stroke-width="3.4" stroke-linecap="round" stroke-linejoin="round"/></svg>
<svg style="position:absolute;left:1168px;top:1376px" width="32" height="32" viewBox="-16 -16 32 32"><circle r="16" fill="#3B8A5F"/><path d="M-5.2 1.2 L-1.4 5.6 L5.2 -5.2" fill="none" stroke="#fff" stroke-width="3.4" stroke-linecap="round" stroke-linejoin="round"/></svg>
<svg style="position:absolute;left:1276px;top:1376px" width="32" height="32" viewBox="-16 -16 32 32"><circle r="16" fill="#3B8A5F"/><path d="M-5.2 1.2 L-1.4 5.6 L5.2 -5.2" fill="none" stroke="#fff" stroke-width="3.4" stroke-linecap="round" stroke-linejoin="round"/></svg>
<svg style="position:absolute;left:1393.8px;top:1376px" width="32" height="32" viewBox="-16 -16 32 32"><circle r="16" fill="#3B8A5F"/><path d="M-5.2 1.2 L-1.4 5.6 L5.2 -5.2" fill="none" stroke="#fff" stroke-width="3.4" stroke-linecap="round" stroke-linejoin="round"/></svg>
<svg style="position:absolute;left:1509.8px;top:1376px" width="32" height="32" viewBox="-16 -16 32 32"><circle r="16" fill="#3B8A5F"/><path d="M-5.2 1.2 L-1.4 5.6 L5.2 -5.2" fill="none" stroke="#fff" stroke-width="3.4" stroke-linecap="round" stroke-linejoin="round"/></svg>
<svg style="position:absolute;left:1619.9px;top:1376px" width="32" height="32" viewBox="-16 -16 32 32"><circle r="16" fill="#3B8A5F"/><path d="M-5.2 1.2 L-1.4 5.6 L5.2 -5.2" fill="none" stroke="#fff" stroke-width="3.4" stroke-linecap="round" stroke-linejoin="round"/></svg>
<svg style="position:absolute;left:1727.8px;top:1376px" width="32" height="32" viewBox="-16 -16 32 32"><circle r="16" fill="#3B8A5F"/><path d="M-5.2 1.2 L-1.4 5.6 L5.2 -5.2" fill="none" stroke="#fff" stroke-width="3.4" stroke-linecap="round" stroke-linejoin="round"/></svg>
<svg style="position:absolute;left:1896.1px;top:1376px" width="32" height="32" viewBox="-16 -16 32 32"><circle r="16" fill="#3B8A5F"/><path d="M-5.2 1.2 L-1.4 5.6 L5.2 -5.2" fill="none" stroke="#fff" stroke-width="3.4" stroke-linecap="round" stroke-linejoin="round"/></svg>
<svg style="position:absolute;left:2061.9px;top:1376px" width="32" height="32" viewBox="-16 -16 32 32"><circle r="16" fill="#3B8A5F"/><path d="M-5.2 1.2 L-1.4 5.6 L5.2 -5.2" fill="none" stroke="#fff" stroke-width="3.4" stroke-linecap="round" stroke-linejoin="round"/></svg>
<svg style="position:absolute;left:2189.8px;top:1376px" width="32" height="32" viewBox="-16 -16 32 32"><circle r="16" fill="#3B8A5F"/><path d="M-5.2 1.2 L-1.4 5.6 L5.2 -5.2" fill="none" stroke="#fff" stroke-width="3.4" stroke-linecap="round" stroke-linejoin="round"/></svg>
<svg style="position:absolute;left:2313.9px;top:1376px" width="32" height="32" viewBox="-16 -16 32 32"><circle r="16" fill="#3B8A5F"/><path d="M-5.2 1.2 L-1.4 5.6 L5.2 -5.2" fill="none" stroke="#fff" stroke-width="3.4" stroke-linecap="round" stroke-linejoin="round"/></svg>
<div style="position:absolute;left:190px;top:1424px;width:2200px;height:2px;background:#DFE1E6;"></div>
<div style="position:absolute;left:190px;top:1426px;width:2200px;height:68px;background:#F4F4F4;"></div>
<div style="position:absolute;left:208.90px;top:1446px;font-size:29px;line-height:29px;font-weight:400;color:#172B4D;white-space:nowrap;letter-spacing:0.139px;-webkit-text-stroke:0.3px #172B4D;">Morgan Cooper <span style="color:#707070;-webkit-text-stroke-color:#707070">(mcooper)</span></div>
<svg style="position:absolute;left:726px;top:1446px" width="32" height="32" viewBox="-16 -16 32 32"><circle r="16" fill="#3B8A5F"/><path d="M-5.2 1.2 L-1.4 5.6 L5.2 -5.2" fill="none" stroke="#fff" stroke-width="3.4" stroke-linecap="round" stroke-linejoin="round"/></svg>
<svg style="position:absolute;left:839.8px;top:1446px" width="32" height="32" viewBox="-16 -16 32 32"><circle r="16" fill="#3B8A5F"/><path d="M-5.2 1.2 L-1.4 5.6 L5.2 -5.2" fill="none" stroke="#fff" stroke-width="3.4" stroke-linecap="round" stroke-linejoin="round"/></svg>
<svg style="position:absolute;left:949.9px;top:1446px" width="32" height="32" viewBox="-16 -16 32 32"><circle r="16" fill="#3B8A5F"/><path d="M-5.2 1.2 L-1.4 5.6 L5.2 -5.2" fill="none" stroke="#fff" stroke-width="3.4" stroke-linecap="round" stroke-linejoin="round"/></svg>
<svg style="position:absolute;left:1058px;top:1446px" width="32" height="32" viewBox="-16 -16 32 32"><circle r="16" fill="#3B8A5F"/><path d="M-5.2 1.2 L-1.4 5.6 L5.2 -5.2" fill="none" stroke="#fff" stroke-width="3.4" stroke-linecap="round" stroke-linejoin="round"/></svg>
<svg style="position:absolute;left:1168px;top:1446px" width="32" height="32" viewBox="-16 -16 32 32"><circle r="16" fill="#3B8A5F"/><path d="M-5.2 1.2 L-1.4 5.6 L5.2 -5.2" fill="none" stroke="#fff" stroke-width="3.4" stroke-linecap="round" stroke-linejoin="round"/></svg>
<svg style="position:absolute;left:1276px;top:1446px" width="32" height="32" viewBox="-16 -16 32 32"><circle r="16" fill="#3B8A5F"/><path d="M-5.2 1.2 L-1.4 5.6 L5.2 -5.2" fill="none" stroke="#fff" stroke-width="3.4" stroke-linecap="round" stroke-linejoin="round"/></svg>
<svg style="position:absolute;left:1393.8px;top:1446px" width="32" height="32" viewBox="-16 -16 32 32"><circle r="16" fill="#3B8A5F"/><path d="M-5.2 1.2 L-1.4 5.6 L5.2 -5.2" fill="none" stroke="#fff" stroke-width="3.4" stroke-linecap="round" stroke-linejoin="round"/></svg>
<svg style="position:absolute;left:1509.8px;top:1446px" width="32" height="32" viewBox="-16 -16 32 32"><circle r="16" fill="#3B8A5F"/><path d="M-5.2 1.2 L-1.4 5.6 L5.2 -5.2" fill="none" stroke="#fff" stroke-width="3.4" stroke-linecap="round" stroke-linejoin="round"/></svg>
<svg style="position:absolute;left:1619.9px;top:1446px" width="32" height="32" viewBox="-16 -16 32 32"><circle r="16" fill="#3B8A5F"/><path d="M-5.2 1.2 L-1.4 5.6 L5.2 -5.2" fill="none" stroke="#fff" stroke-width="3.4" stroke-linecap="round" stroke-linejoin="round"/></svg>
<svg style="position:absolute;left:1727.8px;top:1446px" width="32" height="32" viewBox="-16 -16 32 32"><circle r="16" fill="#3B8A5F"/><path d="M-5.2 1.2 L-1.4 5.6 L5.2 -5.2" fill="none" stroke="#fff" stroke-width="3.4" stroke-linecap="round" stroke-linejoin="round"/></svg>
<svg style="position:absolute;left:1896.1px;top:1446px" width="32" height="32" viewBox="-16 -16 32 32"><circle r="16" fill="#3B8A5F"/><path d="M-5.2 1.2 L-1.4 5.6 L5.2 -5.2" fill="none" stroke="#fff" stroke-width="3.4" stroke-linecap="round" stroke-linejoin="round"/></svg>
<svg style="position:absolute;left:2061.9px;top:1446px" width="32" height="32" viewBox="-16 -16 32 32"><circle r="16" fill="#3B8A5F"/><path d="M-5.2 1.2 L-1.4 5.6 L5.2 -5.2" fill="none" stroke="#fff" stroke-width="3.4" stroke-linecap="round" stroke-linejoin="round"/></svg>
<svg style="position:absolute;left:2189.8px;top:1446px" width="32" height="32" viewBox="-16 -16 32 32"><circle r="16" fill="#3B8A5F"/><path d="M-5.2 1.2 L-1.4 5.6 L5.2 -5.2" fill="none" stroke="#fff" stroke-width="3.4" stroke-linecap="round" stroke-linejoin="round"/></svg>
<svg style="position:absolute;left:2313.9px;top:1446px" width="32" height="32" viewBox="-16 -16 32 32"><circle r="16" fill="#3B8A5F"/><path d="M-5.2 1.2 L-1.4 5.6 L5.2 -5.2" fill="none" stroke="#fff" stroke-width="3.4" stroke-linecap="round" stroke-linejoin="round"/></svg>
<div style="position:absolute;left:190px;top:1494px;width:2200px;height:2px;background:#DFE1E6;"></div>
<div style="position:absolute;left:918px;top:1244px;width:2px;height:252px;background:#CCCCCC;"></div>
<div style="position:absolute;left:1136px;top:1244px;width:2px;height:252px;background:#CCCCCC;"></div>
<div style="position:absolute;left:1354px;top:1244px;width:2px;height:252px;background:#CCCCCC;"></div>
<div style="position:absolute;left:1588px;top:1244px;width:2px;height:252px;background:#CCCCCC;"></div>
<div style="position:absolute;left:1806px;top:1244px;width:2px;height:252px;background:#CCCCCC;"></div>
<div style="position:absolute;left:2014px;top:1244px;width:2px;height:252px;background:#CCCCCC;"></div>
<div style="position:absolute;left:2140px;top:1244px;width:2px;height:252px;background:#CCCCCC;"></div>
<div style="position:absolute;left:190px;top:1516px;width:258px;height:60px;background:#F4F5F7;border-radius:6px;"></div>
<div style="position:absolute;left:211.20px;top:1534px;font-size:29px;line-height:29px;font-weight:400;color:#42526E;white-space:nowrap;letter-spacing:-0.177px;-webkit-text-stroke:0.3px #42526E;">Edit Permissions</div>
</body></html>
